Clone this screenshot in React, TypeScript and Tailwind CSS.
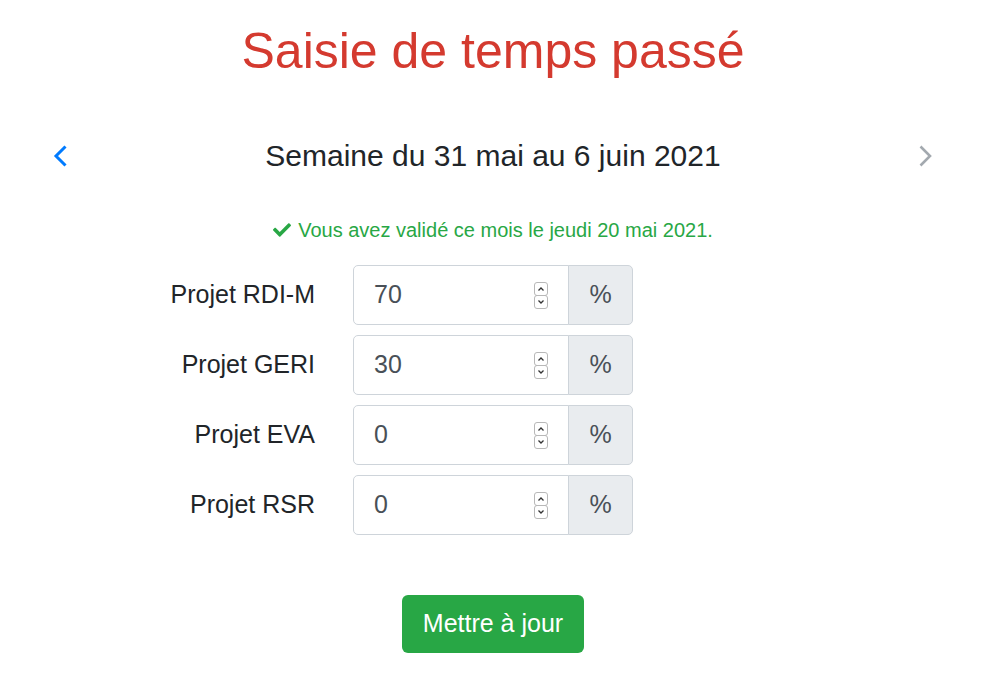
import { useState } from "react";

const projects = [
  { name: "Projet RDI-M", value: "70" },
  { name: "Projet GERI", value: "30" },
  { name: "Projet EVA", value: "0" },
  { name: "Projet RSR", value: "0" },
];

function Spinner() {
  return (
    <div className="flex flex-col w-[14px]">
      <div className="h-[14px] border border-[#b8b8b8] rounded-[3px] flex items-center justify-center">
        <svg width="8" height="6" viewBox="0 0 8 6" fill="none">
          <path d="M1.5 4.5L4 2L6.5 4.5" stroke="#333" strokeWidth="1.3" />
        </svg>
      </div>
      <div className="h-[14px] -mt-[1px] border border-[#b8b8b8] rounded-[3px] flex items-center justify-center">
        <svg width="8" height="6" viewBox="0 0 8 6" fill="none">
          <path d="M1.5 1.5L4 4L6.5 1.5" stroke="#333" strokeWidth="1.3" />
        </svg>
      </div>
    </div>
  );
}

function ProjectRow({ name, value }: { name: string; value: string }) {
  const [val, setVal] = useState(value);
  return (
    <div className="flex items-center h-[60px] mb-[10px]">
      <label className="w-[315px] text-right text-[25px] text-[#212529]">{name}</label>
      <div className="ml-[38px] flex h-[60px]">
        <div className="w-[216px] flex items-center border border-[#ced4da] rounded-l-[5px] bg-white pl-[20px] pr-[20px]">
          <input
            value={val}
            onChange={(e) => setVal(e.target.value)}
            className="flex-1 w-0 text-[25px] text-[#495057] outline-none bg-transparent"
          />
          <Spinner />
        </div>
        <div className="w-[65px] -ml-[1px] flex items-center justify-center border border-[#ced4da] rounded-r-[5px] bg-[#e9ecef] text-[25px] text-[#495057]">
          %
        </div>
      </div>
    </div>
  );
}

export default function App() {
  return (
    <div className="w-[986px] bg-white font-['Liberation_Sans',Arial,sans-serif] text-[#212529]">
      <h1 className="mt-[21px] text-center text-[50px] leading-[60px] text-[#d43a2f]">
        Saisie de temps passé
      </h1>

      <div className="mt-[57px] flex items-center justify-between px-[53px] h-[36px]">
        <button className="w-[14px] flex items-center">
          <svg width="14" height="22" viewBox="0 0 14 22" fill="none">
            <path d="M12.5 1.5L3 11L12.5 20.5" stroke="#007bff" strokeWidth="3" />
          </svg>
        </button>
        <div className="text-[30px] leading-[36px] text-[#212529]">
          Semaine du 31 mai au 6 juin 2021
        </div>
        <button className="w-[14px] flex items-center">
          <svg width="14" height="22" viewBox="0 0 14 22" fill="none">
            <path d="M1.5 1.5L11 11L1.5 20.5" stroke="#a3a9af" strokeWidth="2.6" />
          </svg>
        </button>
      </div>

      <div className="mt-[41px] flex items-center justify-center h-[30px] text-[20px] text-[#28a745]">
        <svg width="18" height="14" viewBox="0 72 512 370" className="mr-[7px]">
          <path
            fill="#28a745"
            d="M173.898 439.404l-166.4-166.4c-9.997-9.997-9.997-26.206 0-36.204l36.203-36.204c9.997-9.998 26.207-9.998 36.204 0L192 312.69 432.095 72.596c9.997-9.997 26.207-9.997 36.204 0l36.203 36.204c9.997 9.997 9.997 26.206 0 36.204l-294.4 294.401c-9.998 9.997-26.207 9.997-36.204-.001z"
          />
        </svg>
        <span>Vous avez validé ce mois le jeudi 20 mai 2021.</span>
      </div>

      <form className="mt-[20px]" onSubmit={(e) => e.preventDefault()}>
        {projects.map((p) => (
          <ProjectRow key={p.name} name={p.name} value={p.value} />
        ))}
        <div className="mt-[60px] flex justify-center">
          <button
            type="submit"
            className="w-[182px] h-[58px] rounded-[6px] bg-[#28a745] text-white text-[25px]"
          >
            Mettre à jour
          </button>
        </div>
      </form>
    </div>
  );
}
